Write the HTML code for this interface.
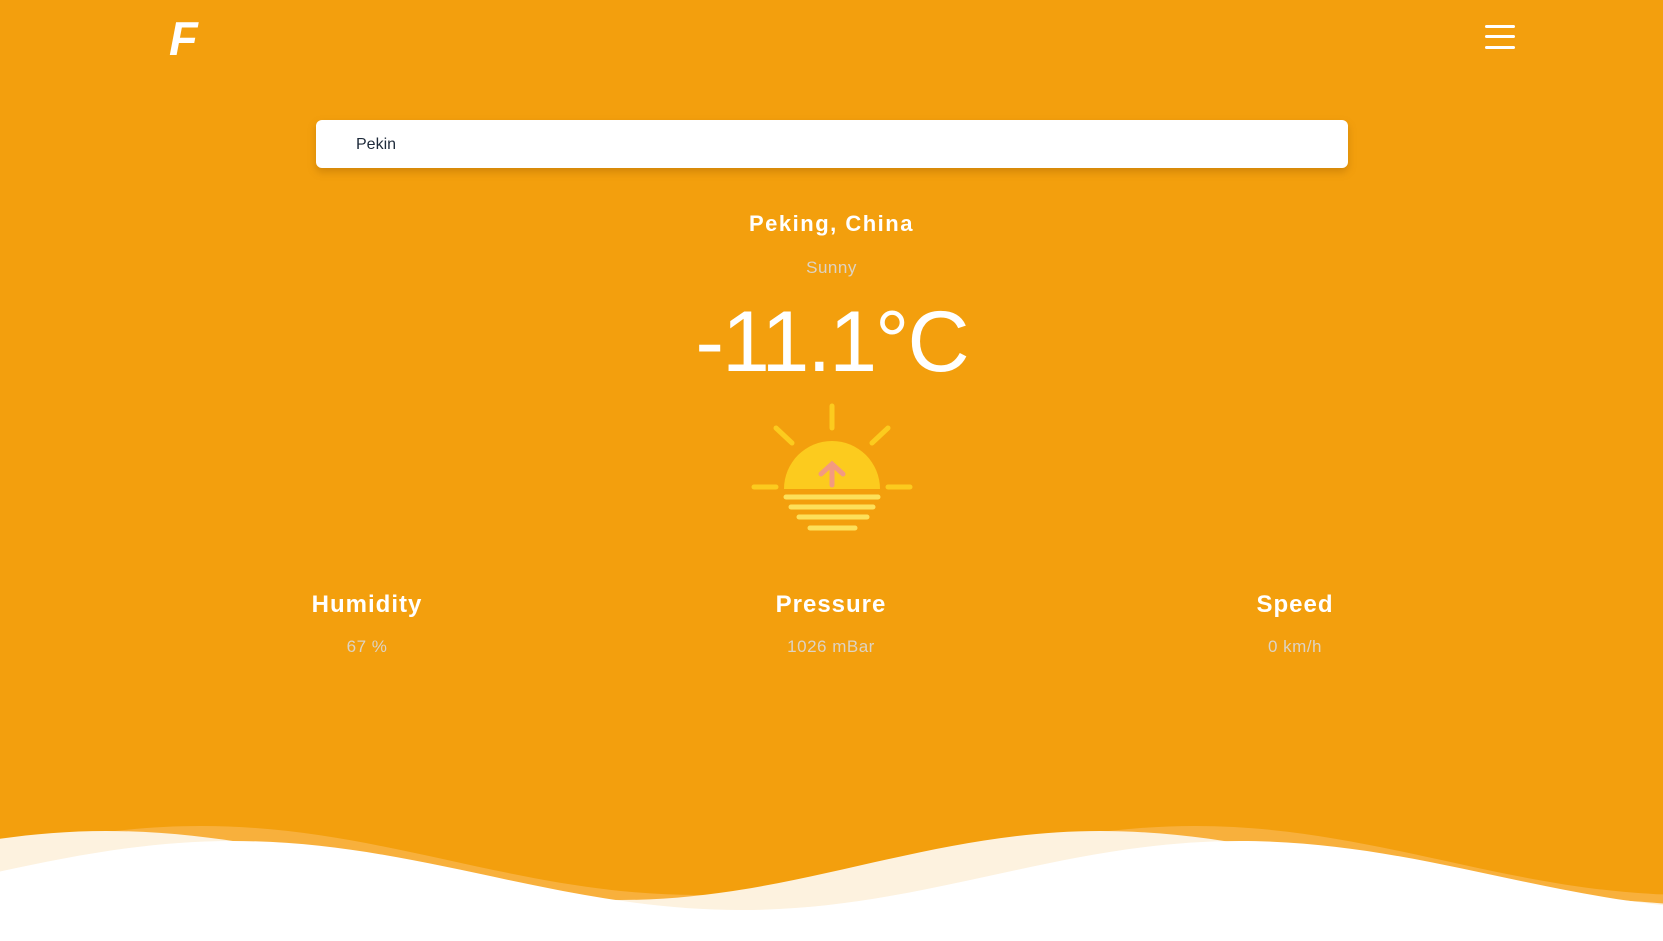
<!DOCTYPE html>
<html><head><meta charset="utf-8"><style>
*{margin:0;padding:0;box-sizing:border-box}
html,body{width:1663px;height:941px;overflow:hidden;background:#f39f0d;font-family:"Liberation Sans",sans-serif}
.abs{position:absolute}
.logo{left:169px;top:14px;color:#fff;font-weight:bold;font-style:italic;font-size:47px;line-height:50px}
.ham{left:1485px;width:30px;height:3px;background:#fff;border-radius:2px}
.search{left:316px;top:120px;width:1032px;height:48px;background:#fff;border-radius:6px;box-shadow:0 4px 8px rgba(150,90,0,.35)}
.search span{position:absolute;left:40px;top:16px;font-size:16px;color:#1e2a3a}
.c{text-align:center;color:#fff}
.stat h2{font-size:24px;letter-spacing:1px;font-weight:bold;color:#fff}
.stat p{font-size:17px;color:#ddd3c4;margin-top:18px;letter-spacing:.5px}
</style></head><body>
<div class="abs logo">F</div>
<div class="abs ham" style="top:25px"></div>
<div class="abs ham" style="top:35px"></div>
<div class="abs ham" style="top:46px"></div>
<div class="abs search"><span>Pekin</span></div>
<div class="abs c" style="left:0;width:1663px;top:211px;font-size:22px;font-weight:bold;letter-spacing:1.5px">Peking, China</div>
<div class="abs c" style="left:0;width:1663px;top:258px;font-size:17px;color:#ddd3c4;letter-spacing:.5px">Sunny</div>
<div class="abs c" style="left:0;width:1663px;top:294px;font-size:86px;letter-spacing:-2px;line-height:96px">-11.1°C</div>
<svg class="abs" style="left:0;top:0" width="1663" height="941">
<g stroke="#fccb1e" stroke-width="5" stroke-linecap="round" fill="none">
<line x1="832" y1="406" x2="832" y2="428"/>
<line x1="776" y1="428" x2="792" y2="443"/>
<line x1="888" y1="428" x2="872" y2="443"/>
<line x1="754" y1="487" x2="776" y2="487"/>
<line x1="888" y1="487" x2="910" y2="487"/>
</g>
<path d="M784,489 A48,48 0 0 1 880,489 Z" fill="#fccb1e"/>
<g stroke="#f39a80" stroke-width="5" stroke-linecap="round" fill="none">
<line x1="832" y1="465" x2="832" y2="485"/>
<polyline points="821,474 832,464 843,474"/>
</g>
<g stroke="#fde05a" stroke-width="5" stroke-linecap="round">
<line x1="786" y1="497" x2="878" y2="497"/>
<line x1="791" y1="507" x2="873" y2="507"/>
<line x1="799" y1="517" x2="867" y2="517"/>
<line x1="810" y1="528" x2="855" y2="528"/>
</g>
<path d="M-296,895 C-115,895 20,826 201,826 C382,826 517,895 698,895 C879,895 1014,826 1195,826 C1376,826 1511,895 1692,895 L1692,941 L-296,941 Z" fill="#f8b03c"/>
<path d="M-380,900 C-203,900 -71,831 106,831 C290,831 436,900 620,900 C795,900 925,831 1100,831 C1282,831 1418,900 1600,900 C1640,900 1663,905 1700,905 L1700,941 L-380,941 Z" fill="#fdf2df"/>
<path d="M-270,910 C-87,910 50,841 233,841 C418,841 557,910 742,910 C923,910 1059,841 1240,841 C1426,841 1564,910 1750,910 L1750,941 L-270,941 Z" fill="#fff"/>
</svg>
<div class="abs c stat" style="left:217px;width:300px;top:591px"><h2>Humidity</h2><p>67 %</p></div>
<div class="abs c stat" style="left:681px;width:300px;top:591px"><h2>Pressure</h2><p>1026 mBar</p></div>
<div class="abs c stat" style="left:1145px;width:300px;top:591px"><h2>Speed</h2><p>0 km/h</p></div>
</body></html>
